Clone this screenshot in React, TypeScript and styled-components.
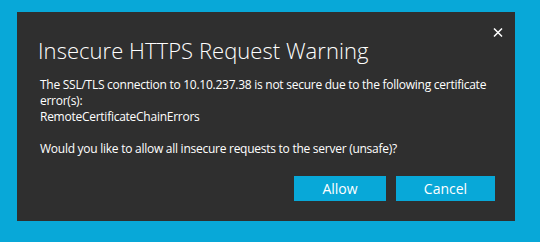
import styled, { createGlobalStyle } from 'styled-components'

const GlobalStyle = createGlobalStyle`
  html, body {
    margin: 0;
    padding: 0;
    background: #08a8d8;
  }
  body {
    font-family: "Open Sans", "Noto Sans", sans-serif;
  }
`

const Page = styled.div`
  width: 540px;
  height: 242px;
  box-sizing: border-box;
  padding: 12px 25px 21px 17px;
  background: #08a8d8;
  display: flex;
`

const Dialog = styled.div`
  position: relative;
  flex: 1;
  background: #2f2f2f;
  color: #ffffff;
  display: flex;
  flex-direction: column;
  padding: 23px 20px 20px 21px;
`

const CloseButton = styled.button`
  position: absolute;
  top: 10px;
  right: 7px;
  width: 20px;
  height: 20px;
  padding: 0;
  border: none;
  background: transparent;
  display: flex;
  align-items: center;
  justify-content: center;
  cursor: pointer;
`

const Title = styled.h1`
  margin: 0;
  font-family: "Open Sans", "Noto Sans", sans-serif;
  font-weight: 300;
  font-size: 22px;
  line-height: 30px;
  letter-spacing: 0.05px;
`

const Message = styled.p`
  margin: 12px 0 0 2px;
  font-size: 12px;
  line-height: 16px;
  letter-spacing: -0.26px;
`

const Actions = styled.div`
  margin-top: auto;
  display: flex;
  justify-content: flex-end;
  gap: 10px;
`

const ActionButton = styled.button<{ $wide?: boolean }>`
  width: ${p => (p.$wide ? '99px' : '92px')};
  height: 25px;
  border: none;
  background: #08a8d8;
  color: #ffffff;
  font-family: "Open Sans", "Noto Sans", sans-serif;
  font-size: 14px;
  padding: 0;
  cursor: pointer;
`

const App = () => {
  return (
    <Page>
      <GlobalStyle />
      <Dialog>
        <CloseButton aria-label="Close">
          <svg width="10" height="9" viewBox="0 0 10 9">
            <path d="M1 0.5 L9 8.5 M9 0.5 L1 8.5" stroke="#ffffff" strokeWidth="1.5" />
          </svg>
        </CloseButton>
        <Title>Insecure HTTPS Request Warning</Title>
        <Message>
          The SSL/TLS connection to 10.10.237.38 is not secure due to the following certificate error(s):
          <br />
          RemoteCertificateChainErrors
          <br />
          <br />
          Would you like to allow all insecure requests to the server (unsafe)?
        </Message>
        <Actions>
          <ActionButton>Allow</ActionButton>
          <ActionButton $wide>Cancel</ActionButton>
        </Actions>
      </Dialog>
    </Page>
  )
}

export default App
